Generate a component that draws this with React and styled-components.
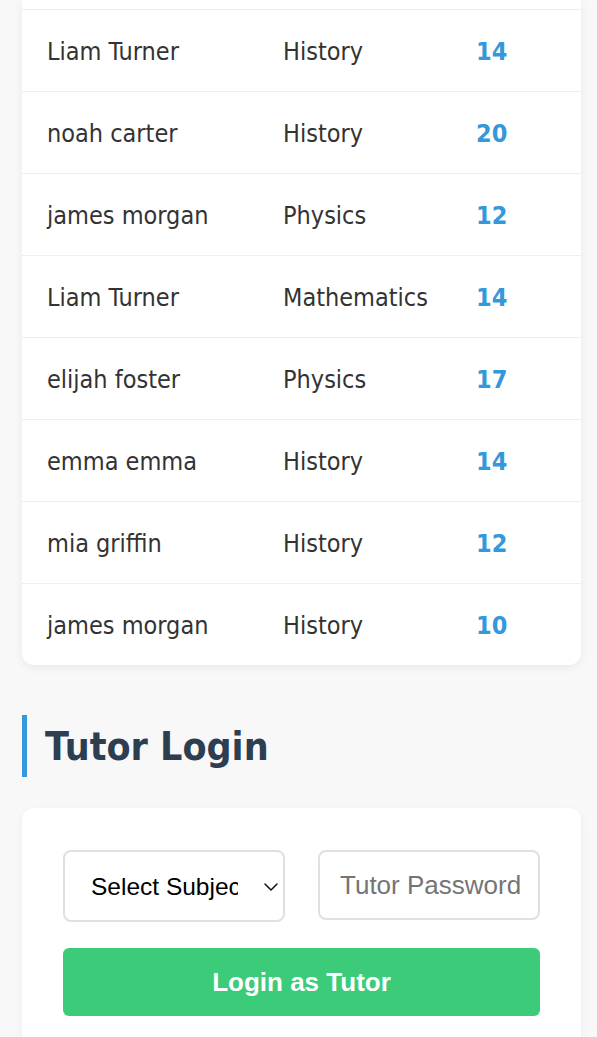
import React from "react";
import styled, { createGlobalStyle } from "styled-components";
import { ChevronDown } from "lucide-react";

const GlobalStyle = createGlobalStyle`
  html, body {
    margin: 0;
    padding: 0;
    background: #f8f8f8;
  }
  body {
    font-family: "DejaVu Sans Condensed", "DejaVu Sans", sans-serif;
    color: #333;
  }
`;

const Page = styled.div`
  padding: 0 16px 0 22px;
  width: 559px;
`;

const Card = styled.div`
  background: #fff;
  border-radius: 0 0 12px 12px;
  box-shadow: 0 3px 10px rgba(0, 0, 0, 0.06);
  padding-top: 9px;
`;

const Row = styled.div`
  display: grid;
  grid-template-columns: 236px 193px 1fr;
  align-items: center;
  height: 80px;
  padding: 1px 0 0 25px;
  border-top: 1px solid #eeeeee;
`;

const Cell = styled.div`
  font-size: 25px;
  color: #333;
  white-space: nowrap;
`;

const Score = styled(Cell)`
  font-weight: 700;
  color: #3498db;
`;

const Heading = styled.h2`
  margin: 50px 0 31px;
  height: 62px;
  display: flex;
  align-items: center;
  border-left: 5px solid #3498db;
  padding-left: 18px;
  font-size: 39px;
  font-weight: 700;
  color: #2c3e50;
`;

const FormCard = styled.div`
  background: #fff;
  border-radius: 12px 12px 0 0;
  box-shadow: 0 3px 10px rgba(0, 0, 0, 0.05);
  padding: 42px 41px 40px;
  display: flex;
  flex-direction: column;
  gap: 26px;
`;

const Fields = styled.div`
  display: flex;
  gap: 33px;
  align-items: flex-start;
`;

const SelectWrap = styled.div`
  position: relative;
  width: 222px;
`;

const Select = styled.select`
  appearance: none;
  width: 222px;
  height: 72px;
  box-sizing: border-box;
  border: 2px solid #e0e0e0;
  border-radius: 8px;
  background: #fff;
  padding: 0 45px 0 26px;
  font-family: "Liberation Sans", Arial, sans-serif;
  font-size: 24.5px;
  color: #000;
`;

const Arrow = styled.span`
  position: absolute;
  right: 2px;
  top: 25px;
  color: #111;
  display: flex;
  pointer-events: none;
`;

const Input = styled.input`
  width: 222px;
  height: 70px;
  box-sizing: border-box;
  border: 2px solid #e0e0e0;
  border-radius: 8px;
  padding: 0 8px 0 20px;
  font-family: "Liberation Sans", Arial, sans-serif;
  font-size: 26px;
  &::placeholder {
    color: #757575;
  }
`;

const Button = styled.button`
  height: 68px;
  border: none;
  border-radius: 6px;
  background: #3ccb78;
  color: #fff;
  font-family: "Liberation Sans", Arial, sans-serif;
  font-size: 26px;
  font-weight: 700;
`;

const results = [
  ["Liam Turner", "History", 14],
  ["noah carter", "History", 20],
  ["james morgan", "Physics", 12],
  ["Liam Turner", "Mathematics", 14],
  ["elijah foster", "Physics", 17],
  ["emma emma", "History", 14],
  ["mia griffin", "History", 12],
  ["james morgan", "History", 10],
];

export default function App() {
  return (
    <>
      <GlobalStyle />
      <Page>
        <Card>
          {results.map(([name, subject, score], i) => (
            <Row key={i}>
              <Cell>{name}</Cell>
              <Cell>{subject}</Cell>
              <Score>{score}</Score>
            </Row>
          ))}
        </Card>
        <Heading>Tutor Login</Heading>
        <FormCard>
          <Fields>
            <SelectWrap>
              <Select defaultValue="">
                <option value="">Select Subject</option>
                <option>History</option>
                <option>Physics</option>
                <option>Mathematics</option>
              </Select>
              <Arrow>
                <ChevronDown size={24} strokeWidth={1.5} />
              </Arrow>
            </SelectWrap>
            <Input type="password" placeholder="Tutor Password" />
          </Fields>
          <Button>Login as Tutor</Button>
        </FormCard>
      </Page>
    </>
  );
}
